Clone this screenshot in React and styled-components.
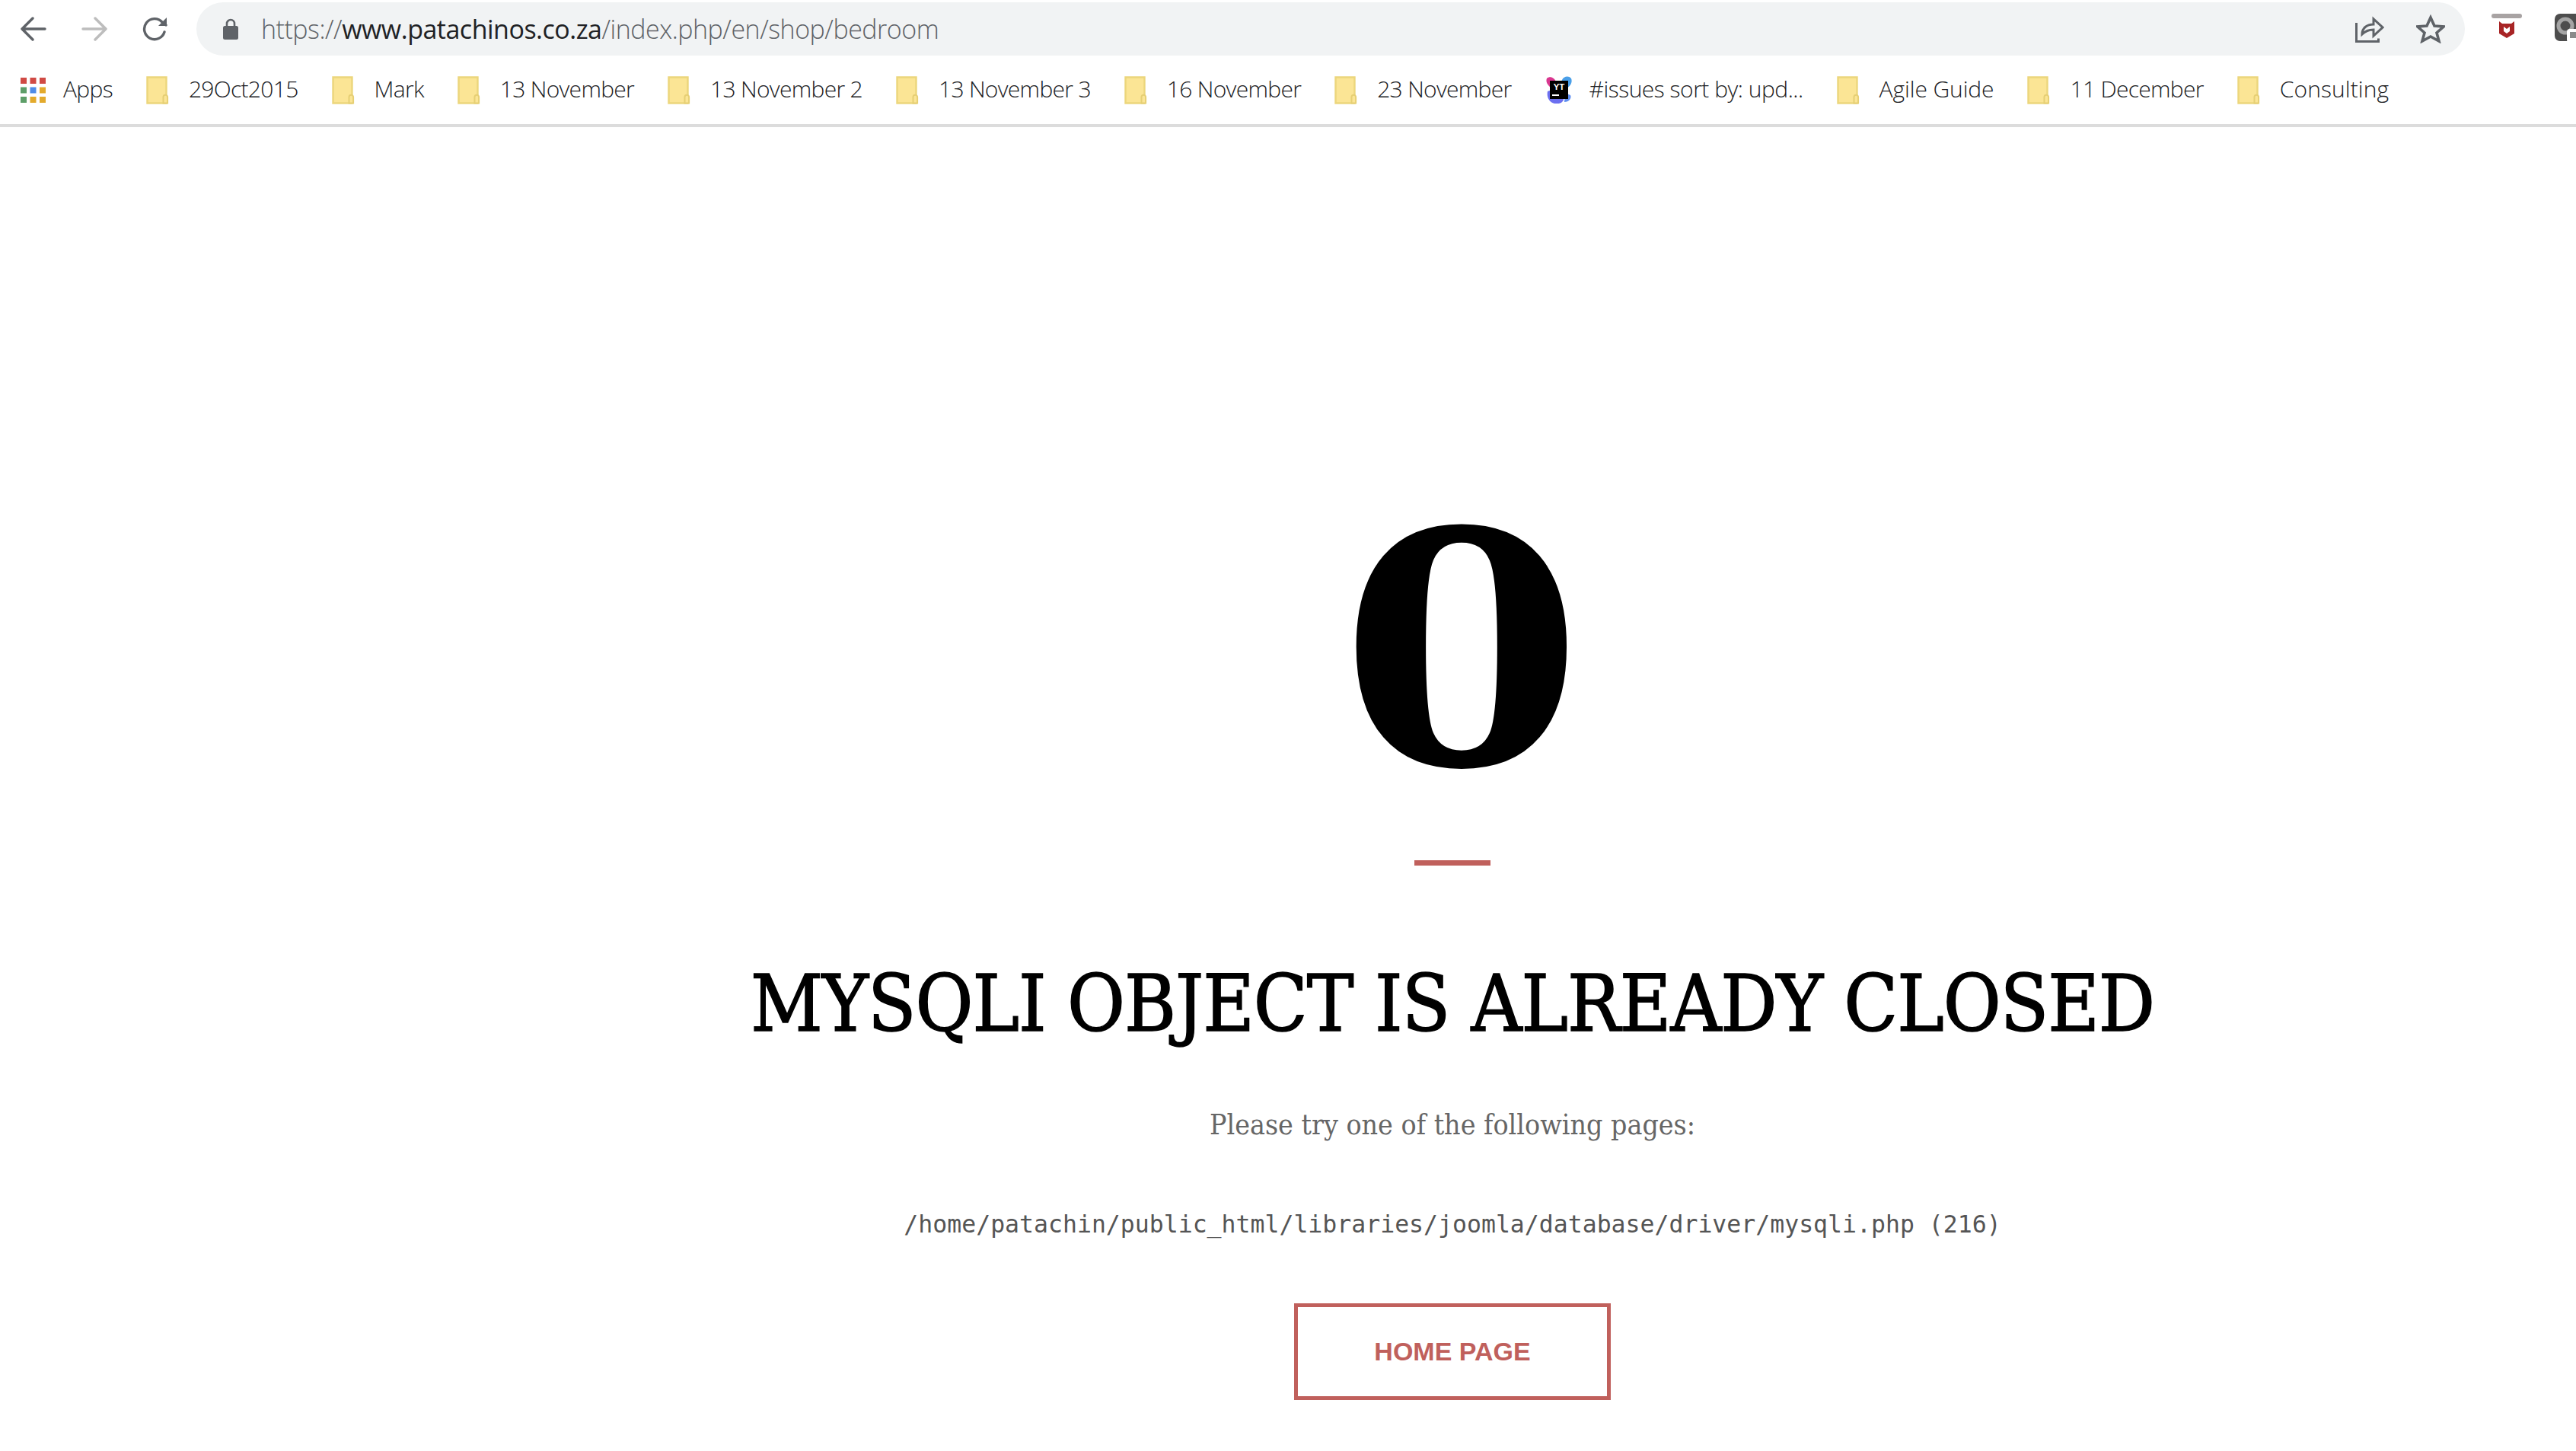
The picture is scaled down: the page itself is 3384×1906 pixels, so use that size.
import React from 'react'
import styled, { createGlobalStyle } from 'styled-components'

const GlobalStyle = createGlobalStyle`
  html, body { margin:0; padding:0; height:100%; overflow:hidden; background:#fff; }
`

const Page = styled.div`
  width:3384px;
  height:1906px;
  overflow:hidden;
  display:flex;
  flex-direction:column;
`

const Chrome = styled.header`
  height:163px;
  border-bottom:4px solid #dcdcdc;
  display:flex;
  flex-direction:column;
  flex-shrink:0;
`

const Toolbar = styled.div`
  display:flex;
  align-items:center;
  padding:3px 0 0 27px;
  height:70px;
  flex-shrink:0;
`

const NavButton = styled.svg`
  width:34px;
  height:34px;
  margin-right:46px;
  flex-shrink:0;
  fill:none;
  stroke:${p => (p.$off ? '#bdbdbd' : '#5f6368')};
  stroke-width:3.4;
  stroke-linecap:round;
  stroke-linejoin:round;
`

const AddressBar = styled.div`
  width:2980px;
  height:70px;
  margin-left:-9px;
  border-radius:35px;
  background:#f1f3f4;
  display:flex;
  align-items:center;
  padding:0 26px 0 35px;
  box-sizing:border-box;
  flex-shrink:0;
`

const Url = styled.div`
  flex:1;
  margin-left:30px;
  font-family:"Open Sans", sans-serif;
  font-weight:300;
  font-size:34px;
  letter-spacing:-0.5px;
  color:#5f6368;
  white-space:nowrap;
  strong { font-weight:400; color:#202124; }
`

const BarIcon = styled.svg`
  width:38px;
  height:38px;
  flex-shrink:0;
  margin-left:${p => p.$gap || 0}px;
`

const Extension = styled.svg`
  width:${p => p.$w}px;
  height:44px;
  margin-left:${p => p.$gap}px;
  flex-shrink:0;
`

const Bookmarks = styled.nav`
  display:flex;
  align-items:center;
  gap:44px;
  padding:23px 0 0 27px;
`

const Bookmark = styled.div`
  display:flex;
  align-items:center;
  gap:${p => p.$gap || 26}px;
  font-family:"Open Sans", sans-serif;
  font-weight:300;
  font-size:30px;
  color:#202124;
  white-space:nowrap;
`

const Label = styled.span`
  margin-bottom:4px;
  letter-spacing:${p => p.$track ?? -0.7}px;
`

const Main = styled.main`
  flex:1;
  display:flex;
  flex-direction:column;
  align-items:center;
  padding-left:432px;
`

const Code = styled.h1`
  margin:428px 0 0 24px;
  font-family:"DejaVu Serif", serif;
  font-weight:700;
  font-size:425px;
  line-height:520px;
  color:#000;
  transform:scaleX(1.08);
`

const Rule = styled.div`
  width:100px;
  height:7px;
  margin-top:15px;
  background:#c0605c;
`

const Title = styled.h2`
  margin:121px 0 0;
  font-family:"DejaVu Serif Condensed", "DejaVu Serif", serif;
  font-weight:400;
  font-size:103px;
  line-height:120px;
  letter-spacing:-1px;
  -webkit-text-stroke:1.5px #000;
  color:#000;
  white-space:nowrap;
`

const Hint = styled.p`
  margin:74px 0 0;
  font-family:"DejaVu Serif Condensed", "DejaVu Serif", serif;
  font-size:37.2px;
  line-height:50px;
  color:#666;
`

const Path = styled.p`
  margin:86px 0 0;
  font-family:"DejaVu Sans Mono", monospace;
  font-size:31.5px;
  line-height:40px;
  color:#555;
  white-space:nowrap;
`

const HomeButton = styled.a`
  margin-top:84px;
  width:416px;
  height:127px;
  box-sizing:border-box;
  border:5px solid #c0605c;
  display:flex;
  align-items:center;
  justify-content:center;
  font-family:"Liberation Sans", sans-serif;
  font-weight:700;
  font-size:34px;
  color:#c0605c;
`

const Folder = () => (
  <svg width="30" height="37" viewBox="0 0 30 37">
    <path d="M1.5 1.5h25v34h-25z" fill="#fbe595" stroke="#ecd67c" strokeWidth="2.4" />
    <path d="M22.500 35.500v-8a2.800 2.800 0 0 1 5.600 0v8z" fill="#fbe595" stroke="#e6cf74" strokeWidth="2" />
  </svg>
)

const AppsIcon = () => (
  <svg width="33" height="33" viewBox="0 0 33 33">
    {[['#d04a44', '#d04a44', '#d04a44'], ['#5d9e68', '#4f8ce8', '#e3aa2c'], ['#5d9e68', '#e3aa2c', '#e3aa2c']].map((row, y) =>
      row.map((c, x) => <rect key={x + '-' + y} x={x * 12.5} y={y * 12.5} width="8" height="8" fill={c} />)
    )}
  </svg>
)

const YouTrackIcon = () => (
  <svg width="36" height="37" viewBox="0 0 36 37">
    <path d="M2 3c4-4 10-1 12 4l3 6-9 3C4 13 0 8 2 3z" fill="#d9368f" />
    <path d="M34 3c-3-4-10-3-12 2l-4 8 10 3c5-3 8-8 6-13z" fill="#4a9fe8" />
    <path d="M3 20c6-3 14-1 20 6 3 4 0 10-7 10-8 1-15-6-13-16z" fill="#6b6ff0" />
    <path d="M26 22l7 3c2 4-2 9-8 9z" fill="#5f8ef0" />
    <rect x="6" y="6" width="24" height="24" fill="#000" />
    <text x="18" y="18" textAnchor="middle" fontFamily="Liberation Sans" fontWeight="700" fontSize="11.5" fill="#fff">YT</text>
    <rect x="9" y="24" width="9" height="2" fill="#fff" />
  </svg>
)

const bookmarks = ['29Oct2015', 'Mark', '13 November', '13 November 2', '13 November 3', '16 November', '23 November']
const moreBookmarks = [
  { name: 'Agile Guide', track: -0.1 },
  { name: '11 December' },
  { name: 'Consulting', track: 0.1 },
]

function App() {
  return (
    <Page>
      <GlobalStyle />
      <Chrome>
        <Toolbar>
          <NavButton viewBox="0 0 34 34">
            <path d="M32 17H3M16 3L2 17l14 14" />
          </NavButton>
          <NavButton viewBox="0 0 34 34" $off>
            <path d="M2 17h29M18 3l14 14-14 14" />
          </NavButton>
          <NavButton viewBox="0 0 34 34">
            <path d="M29 21a13.5 13.5 0 1 1-3-13l5 4" />
            <path d="M32 2v11H21z" fill="#5f6368" stroke="none" />
          </NavButton>
          <AddressBar>
            <svg width="20" height="28" viewBox="0 0 20 28">
              <path d="M5 12V7a5 5 0 0 1 10 0v5" fill="none" stroke="#5f6368" strokeWidth="2.6" />
              <rect y="10" width="20" height="18" rx="2.5" fill="#5f6368" />
            </svg>
            <Url>https://<strong>www.patachinos.co.za</strong>/index.php/en/shop/bedroom</Url>
            <BarIcon viewBox="0 0 38 36" fill="none" stroke="#5f6368" strokeWidth="3">
              <path d="M1.5 10v24.500h29v-4" />
              <path d="M9 25c0-8 6-13 15-13V5l12 11-12 11v-8c-7 0-11 2-15 6z" />
            </BarIcon>
            <BarIcon viewBox="0 0 38 36" $gap={42} fill="none" stroke="#5f6368" strokeWidth="3.6">
              <path d="M19 3l5 11 12 1-9 8 3 11-11-6-11 6 3-11-9-8 12-1z" strokeLinejoin="miter" />
            </BarIcon>
          </AddressBar>
          <Extension $w={40} $gap={35} viewBox="0 0 40 44">
            <rect y="2" width="40" height="6" rx="3" fill="#a8a3a3" />
            <path d="M10 12l4 3h12l4-3v16l-10 6-10-6z" fill="#a82526" />
            <path d="M16 19l4 3 4-3v6l-4 3-4-3z" fill="#fff" />
          </Extension>
          <Extension $w={44} $gap={43} viewBox="0 0 44 44">
            <rect y="2" width="44" height="36" rx="7" fill="#4d4d4d" />
            <circle cx="14" cy="18" r="9" fill="none" stroke="#a5a5a5" strokeWidth="5" />
            <rect x="16" y="22" width="28" height="18" rx="4" fill="#fff" />
            <rect x="20" y="26" width="20" height="8" fill="#8b8b8b" />
          </Extension>
        </Toolbar>
        <Bookmarks>
          <Bookmark $gap={23}><AppsIcon /><Label>Apps</Label></Bookmark>
          {bookmarks.map(b => (
            <Bookmark key={b}><Folder /><Label>{b}</Label></Bookmark>
          ))}
          <Bookmark $gap={22}><YouTrackIcon /><Label $track={-0.5}>#issues sort by: upd...</Label></Bookmark>
          {moreBookmarks.map(b => (
            <Bookmark key={b.name}><Folder /><Label $track={b.track}>{b.name}</Label></Bookmark>
          ))}
        </Bookmarks>
      </Chrome>
      <Main>
        <Code>0</Code>
        <Rule />
        <Title>MYSQLI OBJECT IS ALREADY CLOSED</Title>
        <Hint>Please try one of the following pages:</Hint>
        <Path>/home/patachin/public_html/libraries/joomla/database/driver/mysqli.php (216)</Path>
        <HomeButton>HOME PAGE</HomeButton>
      </Main>
    </Page>
  )
}

export default App
